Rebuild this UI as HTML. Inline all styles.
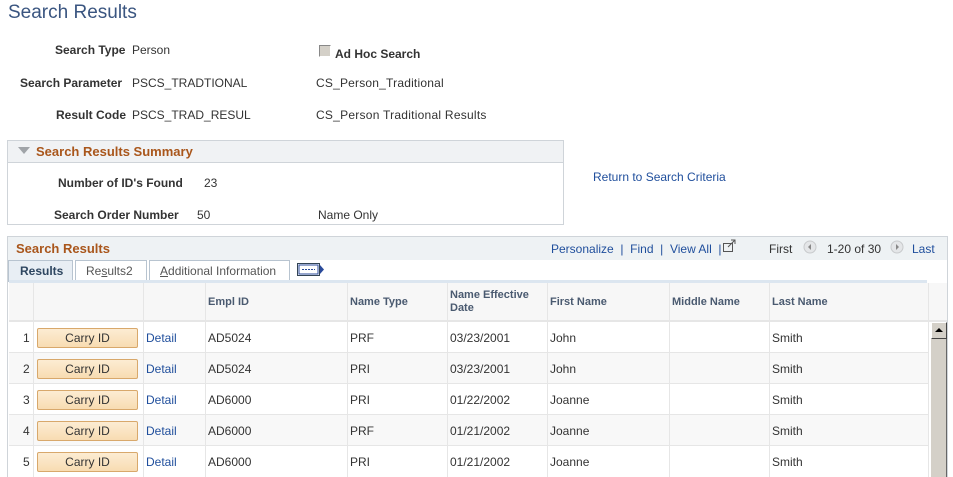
<!DOCTYPE html>
<html style="width:953px;height:477px;overflow:hidden"><head><style>
*{margin:0;padding:0;box-sizing:border-box}
body{width:953px;height:477px;overflow:hidden;background:#fff;font-family:"Liberation Sans",Arial,sans-serif;font-size:12px;color:#333;position:relative}
.a{position:absolute;white-space:nowrap}
.lb{font-weight:bold;color:#333}
.lnk{color:#1f4e9c}
.hd{color:#a9561b;font-weight:bold;font-size:13px}
.btn{position:absolute;left:37px;width:101px;height:20px;background:linear-gradient(#fcecd3,#f8dcb2);border:1px solid #d8a86b;border-radius:2px;text-align:center;line-height:18px;color:#333;font-size:12px}
.vl{position:absolute;width:1px;background:#e6e6e6}
.hl{position:absolute;height:1px;background:#e6e6e6;left:9px;width:919px}
.th{position:absolute;font-weight:bold;color:#4a5a70;font-size:11px}
</style></head><body>
<div class="a" style="left:8px;top:2px;font-size:19px;color:#3a5580">Search Results</div>

<div class="a lb" style="left:55px;top:43px">Search Type</div>
<div class="a" style="left:132px;top:43px">Person</div>
<div class="a" style="left:319px;top:45px;width:12px;height:12px;background:#d4d0c8;border-top:1px solid #888;border-left:1px solid #888;border-right:1px solid #fff;border-bottom:1px solid #fff"></div>
<div class="a lb" style="left:335px;top:47px">Ad Hoc Search</div>
<div class="a lb" style="left:20px;top:76px">Search Parameter</div>
<div class="a" style="left:132px;top:76px">PSCS_TRADTIONAL</div>
<div class="a" style="left:316px;top:76px;letter-spacing:0.2px">CS_Person_Traditional</div>
<div class="a lb" style="left:56px;top:108px">Result Code</div>
<div class="a" style="left:132px;top:108px">PSCS_TRAD_RESUL</div>
<div class="a" style="left:316px;top:108px;letter-spacing:0.25px">CS_Person Traditional Results</div>

<div class="a" style="left:7px;top:140px;width:557px;height:85px;border:1px solid #cfd4d9"></div>
<div class="a" style="left:8px;top:141px;width:555px;height:22px;background:#f0f2f4;border-bottom:1px solid #cfd4d9"></div>
<div class="a" style="left:18px;top:147px;width:0;height:0;border-left:6px solid transparent;border-right:6px solid transparent;border-top:7px solid #a0a4a8"></div>
<div class="a hd" style="left:36px;top:144px">Search Results Summary</div>
<div class="a lb" style="left:58px;top:176px">Number of ID's Found</div>
<div class="a" style="left:204px;top:176px">23</div>
<div class="a lb" style="left:54px;top:208px">Search Order Number</div>
<div class="a" style="left:197px;top:208px">50</div>
<div class="a" style="left:318px;top:208px">Name Only</div>
<div class="a lnk" style="left:593px;top:170px">Return to Search Criteria</div>

<div class="a" style="left:7px;top:236px;width:941px;height:260px;border:1px solid #cfd4d9"></div>
<div class="a" style="left:8px;top:237px;width:939px;height:23px;background:#eef2f4"></div>
<div class="a hd" style="left:16px;top:241px">Search Results</div>
<div class="a lnk" style="left:551px;top:242px">Personalize&nbsp; | &nbsp;Find&nbsp; | &nbsp;View All&nbsp; |</div>
<svg class="a" style="left:722px;top:239px" width="16" height="14"><rect x="1.5" y="4.5" width="9" height="8" fill="none" stroke="#555"/><path d="M6 8 L13 1 M9 1 H13 V5" stroke="#555" fill="none"/></svg>
<div class="a" style="left:769px;top:242px">First</div>
<svg class="a" style="left:803px;top:240px" width="14" height="14"><circle cx="7" cy="7" r="6" fill="#e4e6e8" stroke="#c8cacc"/><path d="M8 4 L5 7 L8 10Z" fill="#888"/></svg>
<div class="a" style="left:827px;top:242px">1-20 of 30</div>
<svg class="a" style="left:890px;top:240px" width="14" height="14"><circle cx="7" cy="7" r="6" fill="#e4e6e8" stroke="#c8cacc"/><path d="M6 4 L9 7 L6 10Z" fill="#888"/></svg>
<div class="a lnk" style="left:912px;top:242px">Last</div>

<div class="a" style="left:8px;top:260px;width:65px;height:22px;background:#e8eef4;border:1px solid #b8c4d0;border-bottom:none;font-weight:bold;color:#2e4660;padding:3px 0 0 11px">Results</div>
<div class="a" style="left:75px;top:260px;width:72px;height:22px;border:1px solid #b8c4d0;border-bottom:none;color:#555;padding:3px 0 0 10px">Re<u>s</u>ults2</div>
<div class="a" style="left:149px;top:260px;width:141px;height:22px;border:1px solid #b8c4d0;border-bottom:none;color:#555;padding:3px 0 0 10px"><u>A</u>dditional Information</div>
<svg class="a" style="left:297px;top:263px" width="28" height="14"><rect x="0.5" y="0.5" width="22" height="12" fill="#fff" stroke="#345"/><rect x="2" y="2" width="19" height="9" fill="none" stroke="#2a4a9a"/><path d="M5 6.5H18" stroke="#2a4a9a" stroke-dasharray="2 1"/><path d="M23 2 L27 6.5 L23 11Z" fill="#2a4a9a"/></svg>
<div class="a" style="left:9px;top:280px;width:918px;height:3px;background:#dce6f0"></div>

<div class="a" style="left:9px;top:283px;width:938px;height:39px;background:#f7f7f7;border-bottom:2px solid #e6e6e6"></div>
<div class="th" style="left:208px;top:296px">Empl ID</div>
<div class="th" style="left:350px;top:296px">Name Type</div>
<div class="th" style="left:450px;top:289px;line-height:13px">Name Effective<br>Date</div>
<div class="th" style="left:550px;top:296px">First Name</div>
<div class="th" style="left:672px;top:296px">Middle Name</div>
<div class="th" style="left:772px;top:296px">Last Name</div>

<div class="a" style="left:9px;top:353px;width:919px;height:31px;background:#f8f8f8"></div>
<div class="a" style="left:9px;top:415px;width:919px;height:31px;background:#f8f8f8"></div>
<div class="hl" style="top:352px"></div><div class="hl" style="top:383px"></div><div class="hl" style="top:414px"></div><div class="hl" style="top:445px"></div>

<div class="vl" style="left:33px;top:283px;height:200px"></div>
<div class="vl" style="left:143px;top:283px;height:200px"></div>
<div class="vl" style="left:205px;top:283px;height:200px"></div>
<div class="vl" style="left:347px;top:283px;height:200px"></div>
<div class="vl" style="left:447px;top:283px;height:200px"></div>
<div class="vl" style="left:547px;top:283px;height:200px"></div>
<div class="vl" style="left:669px;top:283px;height:200px"></div>
<div class="vl" style="left:769px;top:283px;height:200px"></div>
<div class="vl" style="left:928px;top:283px;height:200px"></div>

<div class="a" style="left:931px;top:322px;width:16px;height:160px;background:#d4d0c8;border-right:1px solid #666"></div>
<div class="a" style="left:931px;top:322px;width:16px;height:17px;background:#d4d0c8;border:1px solid #fff;border-right-color:#444;border-bottom-color:#444"></div>
<div class="a" style="left:935px;top:328px;width:0;height:0;border-left:4px solid transparent;border-right:4px solid transparent;border-bottom:4px solid #000"></div>

<div class="a" style="left:23px;top:331px">1</div><div class="btn" style="top:328px">Carry ID</div><div class="a lnk" style="left:146px;top:331px">Detail</div><div class="a" style="left:208px;top:331px">AD5024</div><div class="a" style="left:350px;top:331px">PRF</div><div class="a" style="left:450px;top:331px">03/23/2001</div><div class="a" style="left:550px;top:331px">John</div><div class="a" style="left:772px;top:331px">Smith</div>
<div class="a" style="left:23px;top:362px">2</div><div class="btn" style="top:359px">Carry ID</div><div class="a lnk" style="left:146px;top:362px">Detail</div><div class="a" style="left:208px;top:362px">AD5024</div><div class="a" style="left:350px;top:362px">PRI</div><div class="a" style="left:450px;top:362px">03/23/2001</div><div class="a" style="left:550px;top:362px">John</div><div class="a" style="left:772px;top:362px">Smith</div>
<div class="a" style="left:23px;top:393px">3</div><div class="btn" style="top:390px">Carry ID</div><div class="a lnk" style="left:146px;top:393px">Detail</div><div class="a" style="left:208px;top:393px">AD6000</div><div class="a" style="left:350px;top:393px">PRI</div><div class="a" style="left:450px;top:393px">01/22/2002</div><div class="a" style="left:550px;top:393px">Joanne</div><div class="a" style="left:772px;top:393px">Smith</div>
<div class="a" style="left:23px;top:424px">4</div><div class="btn" style="top:421px">Carry ID</div><div class="a lnk" style="left:146px;top:424px">Detail</div><div class="a" style="left:208px;top:424px">AD6000</div><div class="a" style="left:350px;top:424px">PRF</div><div class="a" style="left:450px;top:424px">01/21/2002</div><div class="a" style="left:550px;top:424px">Joanne</div><div class="a" style="left:772px;top:424px">Smith</div>
<div class="a" style="left:23px;top:455px">5</div><div class="btn" style="top:452px">Carry ID</div><div class="a lnk" style="left:146px;top:455px">Detail</div><div class="a" style="left:208px;top:455px">AD6000</div><div class="a" style="left:350px;top:455px">PRI</div><div class="a" style="left:450px;top:455px">01/21/2002</div><div class="a" style="left:550px;top:455px">Joanne</div><div class="a" style="left:772px;top:455px">Smith</div>
</body></html>
